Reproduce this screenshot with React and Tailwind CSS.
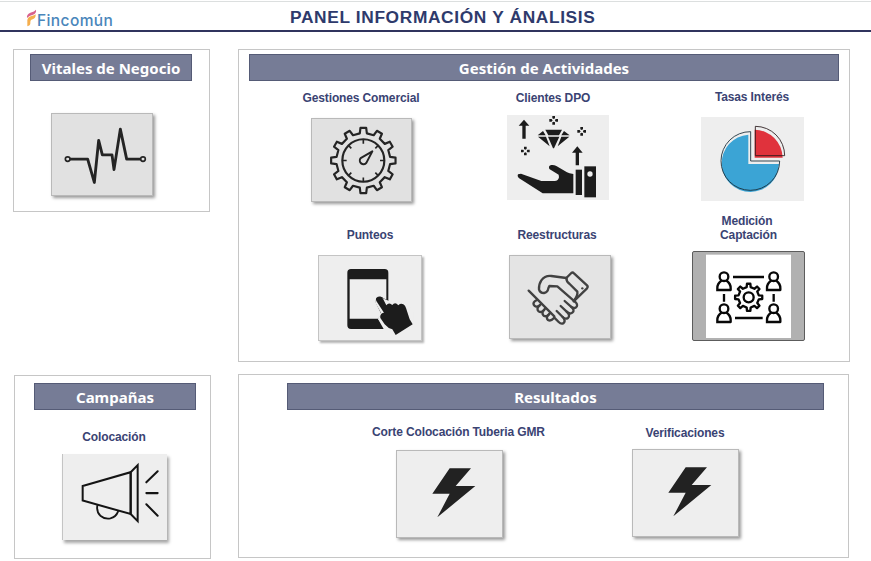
import React from "react";
import clsx from "clsx";

const INK = "#242424";

function gearPath(cx, cy, teeth, outer, inner, top = 0.2, base = 0.3) {
  const step = (Math.PI * 2) / teeth;
  const point = (radius, angle) =>
    `${(cx + radius * Math.sin(angle)).toFixed(1)} ${(cy - radius * Math.cos(angle)).toFixed(1)}`;
  const points = [];
  for (let i = 0; i < teeth; i++) {
    const a = i * step;
    points.push(
      point(inner, a - step * base),
      point(outer, a - step * top),
      point(outer, a + step * top),
      point(inner, a + step * base)
    );
  }
  return `M${points.join("L")}Z`;
}

function Icon({ viewBox, children }) {
  return (
    <svg viewBox={viewBox} className="block h-full w-full" fill="none" preserveAspectRatio="none">
      {children}
    </svg>
  );
}

function PulseIcon() {
  return (
    <Icon viewBox="36 42 300 246">
      <path
        d="M90 179H143L163 250L176 122L187 166H216L222 211L241 88L260 179H302"
        stroke={INK}
        strokeWidth="8.5"
        strokeLinejoin="round"
      />
      <circle cx="83" cy="179" r="7" stroke={INK} strokeWidth="5" />
      <circle cx="309" cy="179" r="7" stroke={INK} strokeWidth="5" />
    </Icon>
  );
}

function GearClockIcon() {
  return (
    <Icon viewBox="36 102 297 243">
      <g stroke={INK} strokeWidth="6.5" strokeLinejoin="round">
        <path d={gearPath(190, 225, 12, 97, 81, 0.17, 0.25)} />
        <circle cx="190" cy="225" r="63" />
        <path
          d="M190 163V175M190 275V287M128 225H140M240 225H252M146 181L154 189M226 261L234 269M146 269L154 261M226 189L234 181"
          strokeWidth="5"
        />
        <path d="M217 198L199 232A11 11 0 1 1 182 218Z" strokeWidth="6" />
      </g>
    </Icon>
  );
}

function Sparkle({ x, y }) {
  return (
    <g fill="#1c1c1c">
      <path d={`M${x - 4} ${y - 13}h8v7l-4 2l-4 -2Z`} />
      <path d={`M${x - 4} ${y + 13}h8v-7l-4 -2l-4 2Z`} />
      <path d={`M${x - 13} ${y - 4}v8h7l2 -4l-2 -4Z`} />
      <path d={`M${x + 13} ${y - 4}v8h-7l-2 -4l2 -4Z`} />
    </g>
  );
}

function DiamondHandIcon() {
  return (
    <Icon viewBox="36 90 306 255">
      <g fill="#1c1c1c">
        <path d="M87 104L103 122H92V161H82V122H71Z" />
        <path d="M247 184L263 203H252V241H242V203H231Z" />
        <path d="M151 134H201L192 151H160Z" />
        <path d="M144 138L152 151H128ZM207 138L224 151H199Z" />
        <path d="M129 155H153L164 184ZM159 155H193L177 190H174ZM199 155H223L188 184Z" />
        <path d="M69 268L78 266L139 288H179Q190 288 192 277L191 269L163 252Q159 242 169 240Q177 239 184 243L216 262Q222 266 235 267V325H143L76 282Q65 276 69 268Z" />
        <path d="M242 254H261V330H242Z" />
        <path d="M268 244H303V337H268Z" />
      </g>
      <circle cx="285" cy="267" r="8" fill="#eeeeee" />
      <Sparkle x={176} y={106} />
      <Sparkle x={260} y={139} />
      <Sparkle x={91} y={198} />
    </Icon>
  );
}

function PieIcon() {
  return (
    <Icon viewBox="33 96 309 252">
      <path d="M175 149A86 86 0 1 0 267 237H175Z" fill="#3ba4d5" />
      <path d="M194 134A86 86 0 0 1 278 218H194Z" fill="#e0323c" />
      <path d="M182 140A88 88 0 1 0 269 228H182Z" stroke="#182c38" strokeWidth="2.6" />
      <path d="M196 124A88 88 0 0 1 284 212H196Z" stroke="#29191c" strokeWidth="2.6" />
    </Icon>
  );
}

function PhoneIcon() {
  return (
    <Icon viewBox="42 93 306 252">
      <path
        fillRule="evenodd"
        fill="#1c1c1c"
        d="M138 132H239Q250 132 250 143V228L236 220Q228 211 216 219Q209 225 213 235L229 268L219 282L236 312H138Q127 312 127 301V143Q127 132 138 132ZM134 163V281H244V163Z"
      />
      <path d="M221 213Q207 220 212 235L228 264L219 282L243 312L270 332L326 298V261L304 230L250 228Z" fill="#eeeeee" />
      <path
        d="M214 228Q210 218 219 215Q230 212 234 221L244 241Q249 233 256 236L262 240Q267 233 275 236L280 241Q287 234 295 238Q301 241 303 249L314 283L323 298L272 330L262 313Q249 310 239 298L226 279Q224 268 233 264L237 263Z"
        fill="#1c1c1c"
      />
    </Icon>
  );
}

function HandshakeIcon() {
  return (
    <Icon viewBox="45 93 300 246">
      <g stroke="#414141" strokeWidth="7" strokeLinecap="round" strokeLinejoin="round">
        <path d="M101 197L178 274" />
        <path d="M214 159L169 153Q150 151 139 166Q131 178 132 193Q135 204 147 204Q158 202 160 190L163 183L187 184L242 232Q250 241 243 247Q237 252 228 245L209 228" />
        <path d="M214 159L229 144Q233 141 237 145L276 181Q280 185 276 190L236 229" />
        <path d="M214 159Q214 170 224 177L247 200Q249 210 238 225" />
        <path d="M228 245Q241 256 232 263Q224 269 215 260L197 243" />
        <path d="M215 260Q227 271 219 279Q211 284 203 276L185 258" />
        <path d="M203 276Q213 287 206 294Q199 299 191 291L178 278" />
        <path d="M126 225Q113 231 116 239Q122 249 133 242L138 237" />
        <path d="M133 242Q123 251 131 259Q139 265 147 255L151 250" />
        <path d="M147 255Q138 264 146 272Q154 277 162 268L165 264" />
        <path d="M162 268Q151 278 159 285Q167 290 176 280" />
      </g>
      <circle cx="262" cy="190" r="3.5" fill="#414141" />
    </Icon>
  );
}

function Person({ x, y }) {
  return (
    <g>
      <circle cx={x} cy={y} r="13" />
      <path
        d={`M${x - 20} ${y + 40}V${y + 34}Q${x - 20} ${y + 21} ${x - 9} ${y + 13}M${x + 9} ${y + 13}Q${x + 20} ${y + 21} ${x + 20} ${y + 34}V${y + 40}H${x - 20}`}
        strokeLinecap="square"
      />
    </g>
  );
}

function TeamGearIcon() {
  return (
    <Icon viewBox="39 141 333 264">
      <rect x="78" y="149" width="255" height="250" fill="#ffffff" />
      <g stroke="#080808" strokeWidth="7" strokeLinejoin="round">
        <Person x={132} y={215} />
        <Person x={281} y={215} />
        <Person x={132} y={311} />
        <Person x={281} y={311} />
        <path d="M159 216H252M165 339H248M132 267V290M281 267V290" />
        <path d={gearPath(206, 277, 8, 41, 31, 0.16, 0.25)} />
        <circle cx="206" cy="277" r="15" />
      </g>
    </Icon>
  );
}

function MegaphoneIcon() {
  return (
    <Icon viewBox="189 267 312 255">
      <g stroke="#141414" strokeWidth="6" strokeLinecap="round" strokeLinejoin="miter">
        <path d="M248 362L392 321V445L248 405Z" />
        <path d="M392 321L413 300V466L392 445Z" />
        <path d="M292 420Q289 438 301 450Q314 461 331 458Q348 454 354 438" strokeWidth="5.5" />
        <path d="M439 351L473 318M439 383H473M439 416L473 450" />
      </g>
    </Icon>
  );
}

function BoltIcon() {
  return (
    <Icon viewBox="111 228 315 258">
      <path d="M269 280H333L287 333H346L232 427L269 356H217Z" fill="#222222" />
    </Icon>
  );
}

function Panel({ title, className, titleClass, children }) {
  return (
    <section className={clsx("border border-[#c6c6c6] bg-white", className)}>
      <h2
        className={clsx(
          "flex h-[27px] items-center justify-center border border-[#555b76] bg-[#767c96] pt-px font-['Noto_Sans',sans-serif] text-[15px] font-bold leading-none text-white",
          titleClass
        )}
      >
        {title}
      </h2>
      {children}
    </section>
  );
}

const raised = "border border-[#b9b9b9] shadow-[2px_2px_3px_rgba(0,0,0,0.4)]";

function Item({ label, tileClass, className, children }) {
  return (
    <div className={clsx("flex shrink-0 flex-col items-start", className)}>
      {label && (
        <span className="w-full text-center text-[12px] font-bold leading-[14px] tracking-[-0.13px] text-[#3a4373]">
          {label}
        </span>
      )}
      <button className={clsx("block overflow-hidden", tileClass)}>{children}</button>
    </div>
  );
}

export default function App() {
  return (
    <div className="h-[561px] w-[871px] overflow-hidden bg-white font-['Liberation_Sans',Arial,sans-serif]">
      <header className="mt-px flex h-[31px] items-start border-b-2 border-t border-b-[#30345e] border-t-[#dcdfdf]">
        <div className="ml-[26px] mt-[7px] flex w-[264px] items-start">
          <svg viewBox="78 26 33 54" className="h-[18px] w-[11px]" fill="none">
            <path d="M81 53Q79 42 91 37Q104 34 108 28Q110 39 99 43Q87 45 81 53Z" fill="#d8608c" />
            <path d="M82 76V59Q84 49 95 47Q103 46 107 42Q108 54 98 57Q91 58 91 64V69Q91 76 82 78Z" fill="#f5ae4d" />
          </svg>
          <span className="mt-[3px] font-['Inter',sans-serif] text-[15.5px] font-medium leading-[18px] tracking-[0.4px] text-[#4a86bb]">
            Fincomún
          </span>
        </div>
        <h1 className="mt-[5px] whitespace-nowrap text-[17.33px] font-bold leading-[20px] tracking-[0.64px] text-[#2e3a6c]">
          PANEL INFORMACIÓN Y ÁNALISIS
        </h1>
      </header>

      <main className="flex items-start pt-[17px]">
        <div className="ml-[13px] w-[198px]">
          <Panel title="Vitales de Negocio" className="h-[163px] w-[197px]" titleClass="mb-px ml-[16px] mt-[4px] w-[162px]">
            <Item className="ml-[37px] mt-[32px]" tileClass={clsx("h-[83px] w-[102px] bg-[#e1e1e1]", raised)}>
              <PulseIcon />
            </Item>
          </Panel>
          <Panel
            title="Campañas"
            className="ml-px mt-[163px] h-[184px] w-[197px]"
            titleClass="ml-[19px] mt-[7px] w-[162px]"
          >
            <Item
              label="Colocación"
              className="ml-[38px] mt-[20px] w-[122px]"
              tileClass="ml-[9px] mt-[10px] h-[86px] w-[105px] border-l border-[#c4c4c4] bg-[#eeeeee] shadow-[2px_3px_3px_rgba(0,0,0,0.35)]"
            >
              <MegaphoneIcon />
            </Item>
          </Panel>
        </div>

        <div className="ml-[27px] w-[612px]">
          <Panel title="Gestión de Actividades" className="h-[313px] w-[612px]" titleClass="mb-px ml-[10px] mt-[4px] w-[590px]">
            <div className="flex h-[132px] items-start">
              <Item
                label="Gestiones Comercial"
                className="ml-[61px] mt-[9px] w-[122px]"
                tileClass={clsx("ml-[11px] mt-[13px] h-[84px] w-[101px] bg-[#e1e1e1]", raised)}
              >
                <GearClockIcon />
              </Item>
              <Item label="Clientes DPO" className="ml-[70px] mt-[9px] w-[122px]" tileClass="ml-[15px] mt-[10px] h-[85px] w-[102px] bg-[#eeeeee]">
                <DiamondHandIcon />
              </Item>
              <Item label="Tasas Interés" className="ml-[77px] mt-[8px] w-[122px]" tileClass="ml-[10px] mt-[13px] h-[84px] w-[103px] bg-[#eeeeee]">
                <PieIcon />
              </Item>
            </div>
            <div className="flex items-start">
              <Item
                label="Punteos"
                className="ml-[70px] mt-[14px] w-[122px]"
                tileClass="ml-[9px] mt-[13px] h-[86px] w-[104px] border border-[#c4c4c4] bg-[#eeeeee] shadow-[2px_2px_2px_rgba(0,0,0,0.3)]"
              >
                <PhoneIcon />
              </Item>
              <Item
                label="Reestructuras"
                className="ml-[65px] mt-[14px] w-[122px]"
                tileClass={clsx("ml-[13px] mt-[13px] h-[84px] w-[102px] bg-[#e4e4e4]", raised)}
              >
                <HandshakeIcon />
              </Item>
              <Item
                label={
                  <>
                    <span className="block pr-[2px]">Medición</span>
                    <span className="block pl-px">Captación</span>
                  </>
                }
                className="ml-[69px] w-[122px]"
                tileClass="ml-[5px] mt-[9px] h-[90px] w-[113px] rounded-[2px] border border-[#5c5c5c] bg-[#b1b1b1]"
              >
                <TeamGearIcon />
              </Item>
            </div>
          </Panel>

          <Panel title="Resultados" className="mt-[12px] h-[184px] w-[611px]" titleClass="ml-[48px] mt-[8px] w-[537px]">
            <div className="flex items-start">
              <Item
                label="Corte Colocación Tuberia GMR"
                className="ml-[129px] mt-[15px] w-[181px]"
                tileClass={clsx("ml-[28px] mt-[11px] h-[88px] w-[107px] bg-[#eeeeee]", raised)}
              >
                <BoltIcon />
              </Item>
              <Item
                label="Verificaciones"
                className="ml-[75px] mt-[16px] w-[122px]"
                tileClass={clsx("ml-[8px] mt-[9px] h-[88px] w-[107px] bg-[#eeeeee]", raised)}
              >
                <BoltIcon />
              </Item>
            </div>
          </Panel>
        </div>
      </main>
    </div>
  );
}
